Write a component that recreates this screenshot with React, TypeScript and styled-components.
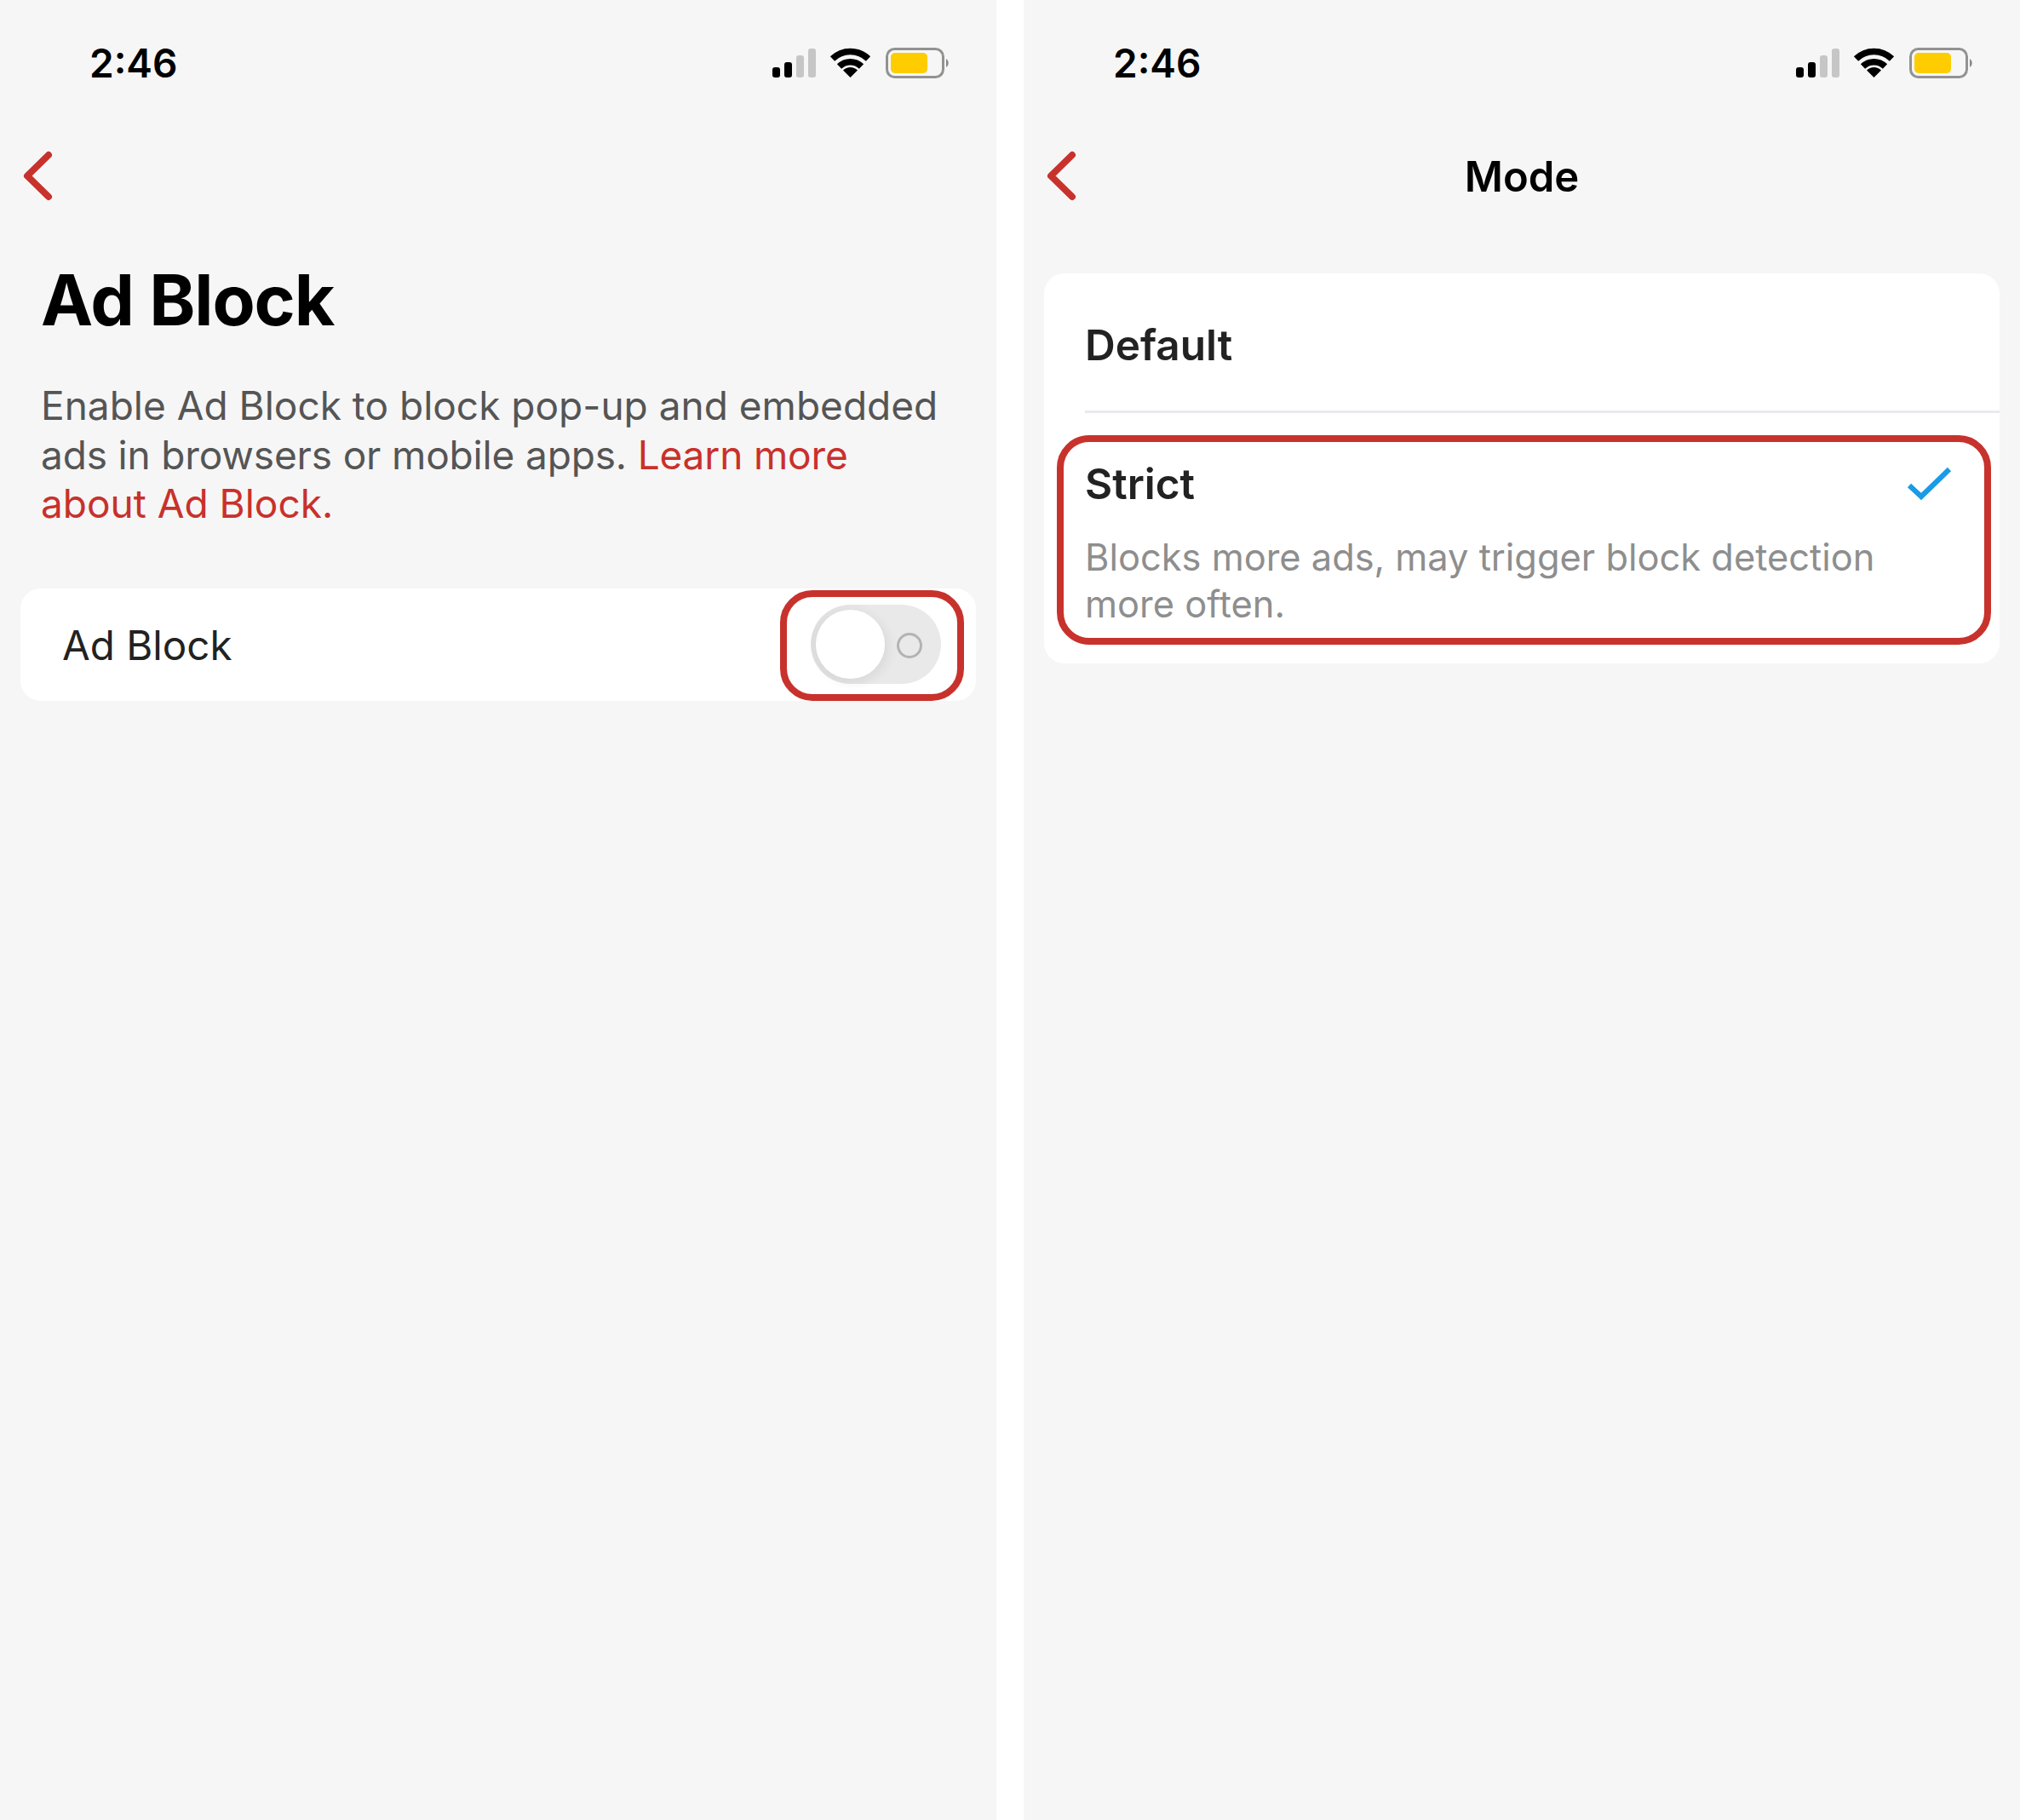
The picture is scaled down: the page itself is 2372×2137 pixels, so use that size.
import React from "react";
import styled, { createGlobalStyle } from "styled-components";

const Global = createGlobalStyle`
  html, body { margin: 0; padding: 0; background: #fff; }
  body { font-family: Inter, "Liberation Sans", sans-serif; -webkit-font-smoothing: antialiased; }
`;

const Page = styled.div`
  width: 2372px;
  height: 2137px;
  display: flex;
  justify-content: space-between;
  background: #fff;
  overflow: hidden;
`;
const Panel = styled.section`
  width: 1170px;
  height: 2137px;
  background: #f6f6f6;
  display: flex;
  flex-direction: column;
`;
const StatusBar = styled.div`
  height: 148px;
  box-sizing: border-box;
  padding: 45px 55px 0 105px;
  display: flex;
  justify-content: space-between;
  align-items: flex-start;
`;
const Time = styled.span`
  font-size: 46px;
  line-height: 58px;
  font-weight: 600;
  color: #000;
`;
const StatusIcons = styled.svg`
  width: 210px;
  height: 40px;
  margin-top: 8px;
`;
const NavBar = styled.div`
  height: 120px;
  position: relative;
  display: flex;
  align-items: center;
  justify-content: center;
`;
const BackIcon = styled.svg`
  position: absolute;
  left: 24px;
  top: 24px;
  width: 42px;
  height: 68px;
`;
const NavTitle = styled.h2`
  margin: 0;
  font-size: 49px;
  font-weight: 600;
  color: #000;
  line-height: 60px;
`;
const Content = styled.div`
  padding: 33px 48px 0;
`;
const Title = styled.h1`
  margin: 0;
  font-size: 82px;
  line-height: 104px;
  font-weight: 700;
  color: #000;
  letter-spacing: -1.1px;
`;
const Lead = styled.p`
  margin: 43px 0 0;
  font-size: 46px;
  line-height: 57.5px;
  color: #555;
  font-weight: 400;
`;
const Tight = styled.span`
  letter-spacing: -0.16px;
`;
const Link = styled.span`
  color: #c8312b;
`;
const Card = styled.div<{ $top: number }>`
  margin: ${(p) => p.$top}px 24px 0;
  background: #fff;
  border-radius: 24px;
`;
const ToggleRow = styled.div`
  height: 132px;
  box-sizing: border-box;
  padding: 0 50px 0 49px;
  position: relative;
  display: flex;
  align-items: center;
  justify-content: space-between;
`;
const RowLabel = styled.span`
  margin-top: 2px;
  font-size: 47.5px;
  font-weight: 400;
  color: #222;
`;
const Toggle = styled.div`
  width: 153px;
  height: 93px;
  margin-right: -9px;
  margin-left: auto;
  border-radius: 47px;
  background: linear-gradient(90deg, #dedede 0%, #e9e9e9 45%);
  position: relative;
`;
const Knob = styled.div`
  position: absolute;
  left: 6px;
  top: 6px;
  width: 81px;
  height: 81px;
  border-radius: 50%;
  background: #fff;
  box-shadow: 4px 4px 14px rgba(0, 0, 0, 0.07);
`;
const OffMark = styled.div`
  position: absolute;
  left: 101px;
  top: 33px;
  width: 30px;
  height: 30px;
  box-sizing: border-box;
  border: 3px solid #b3b3b3;
  border-radius: 50%;
`;
const Highlight = styled.div<{ $l: number; $t: number; $w: number; $h: number; $r: number }>`
  position: absolute;
  left: ${(p) => p.$l}px;
  top: ${(p) => p.$t}px;
  width: ${(p) => p.$w}px;
  height: ${(p) => p.$h}px;
  box-sizing: border-box;
  border: 8px solid #c8322c;
  border-radius: ${(p) => p.$r}px;
  pointer-events: none;
`;
const OptionList = styled.div`
  position: relative;
  display: flex;
  flex-direction: column;
`;
const OptionDefault = styled.div`
  height: 164px;
  box-sizing: border-box;
  margin-left: 48px;
  padding-top: 52px;
  border-bottom: 3px solid #e9eaf0;
`;
const OptionName = styled.div`
  font-size: 49.5px;
  line-height: 64px;
  font-weight: 600;
  color: #222;
`;
const OptionStrict = styled.div`
  position: relative;
  padding: 51px 48px 43px 48px;
`;
const OptionDesc = styled.div`
  margin-top: 27px;
  font-size: 43.4px;
  line-height: 54.5px;
  color: #8e8e8e;
  max-width: 960px;
`;
const Check = styled.svg`
  position: absolute;
  right: 52px;
  top: 61px;
  width: 60px;
  height: 48px;
`;

const Status = () => (
  <StatusIcons viewBox="905 53 210 40">
    <rect x="907" y="79" width="9" height="12" rx="3" fill="#000" />
    <rect x="921" y="73" width="9" height="18" rx="3" fill="#000" />
    <rect x="935" y="65" width="9" height="26" rx="3" fill="#c6c6c6" />
    <rect x="949" y="57" width="9" height="34" rx="3" fill="#c6c6c6" />
    <path d="M998.5 91 L990 82.5 A12 12 0 0 1 1007 82.5 Z" fill="#000" />
    <path d="M985.5 78 A18.5 18.5 0 0 1 1011.5 78" fill="none" stroke="#000" strokeWidth="7.5" />
    <path d="M977.5 69 A30 30 0 0 1 1019.5 69" fill="none" stroke="#000" strokeWidth="7.5" />
    <rect x="1041.5" y="57.5" width="66" height="33" rx="9" fill="none" stroke="#929292" strokeWidth="3" />
    <rect x="1046" y="62" width="43" height="24" rx="5" fill="#ffcc00" />
    <path d="M1111 69 A6 6 0 0 1 1111 79 Z" fill="#888" />
  </StatusIcons>
);

const Back = () => (
  <BackIcon viewBox="0 0 42 68">
    <path d="M33 10 L8 34.5 L33 59" fill="none" stroke="#c8322c" strokeWidth="8" strokeLinecap="round" strokeLinejoin="round" />
  </BackIcon>
);

export default function App() {
  return (
    <Page>
      <Global />
      <Panel>
        <StatusBar>
          <Time>2:46</Time>
          <Status />
        </StatusBar>
        <NavBar>
          <Back />
        </NavBar>
        <Content>
          <Title>Ad Block</Title>
          <Lead>
            Enable Ad Block to block pop-up and embedded{" "}
            <Tight>
              ads in browsers or mobile apps. <Link>Learn more</Link>
            </Tight>{" "}
            <Link>about Ad Block.</Link>
          </Lead>
        </Content>
        <Card $top={70}>
          <ToggleRow>
            <RowLabel>Ad Block</RowLabel>
            <Toggle>
              <Knob />
              <OffMark />
            </Toggle>
            <Highlight $l={892} $t={2} $w={216} $h={130} $r={38} />
          </ToggleRow>
        </Card>
      </Panel>
      <Panel>
        <StatusBar>
          <Time>2:46</Time>
          <Status />
        </StatusBar>
        <NavBar>
          <Back />
          <NavTitle>Mode</NavTitle>
        </NavBar>
        <Card $top={53}>
          <OptionList>
            <OptionDefault>
              <OptionName>Default</OptionName>
            </OptionDefault>
            <OptionStrict>
              <OptionName>Strict</OptionName>
              <OptionDesc>Blocks more ads, may trigger block detection more often.</OptionDesc>
              <Check viewBox="0 0 60 48">
                <path d="M6 24 L20 37 L53 5" fill="none" stroke="#1a9be6" strokeWidth="6" />
              </Check>
              <Highlight $l={15} $t={26} $w={1097} $h={246} $r={38} />
            </OptionStrict>
          </OptionList>
        </Card>
      </Panel>
    </Page>
  );
}
